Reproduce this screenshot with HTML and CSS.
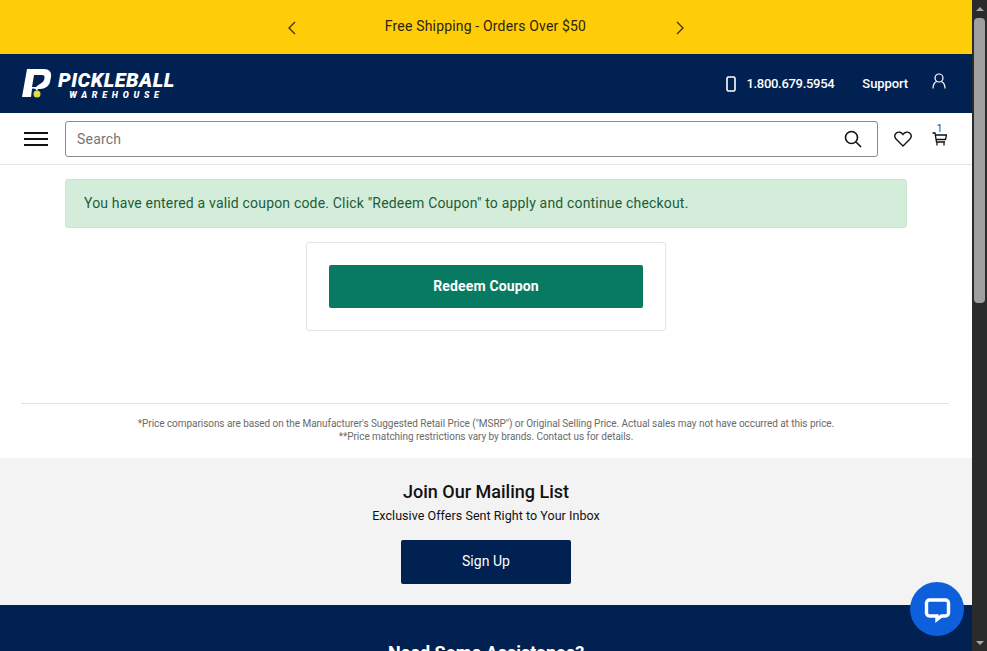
FILE: index.html
```html
<!DOCTYPE html>
<html lang="en">
<head>
  <meta charset="UTF-8" />
  <title>Pickleball Warehouse</title>
  <link rel="stylesheet" href="styles.css">
</head>
<body>
  <div class="page">
    <div class="promo">
      <svg class="promo-arrow" width="10" height="14" viewBox="0 0 10 14"><path d="M8 1 2 7l6 6" /></svg>
      <span class="promo-text">Free Shipping - Orders Over $50</span>
      <svg class="promo-arrow" width="10" height="14" viewBox="0 0 10 14"><path d="m2 1 6 6-6 6" /></svg>
    </div>

    <div class="nav">
      <a class="logo">
        <svg class="logo-mark" width="30" height="30" viewBox="0 0 30 30">
          <path fill="#fff" fill-rule="evenodd" d="M5 0h17c5 0 8 3 7 8l-1 5c-1 4-5 7-10 7h-2l-1 2c-1-2-3-3-5-2l-1 8H0Zm7 6-2 12h4c3-3 7-4 8-7l.5-2c.3-2-.5-3-2.500-3Z" />
          <circle cx="15" cy="25" r="3.500" fill="#e3dc3c" />
        </svg>
        <span class="logo-words">
          <span class="logo-top">PICKLEBALL</span>
          <span class="logo-bottom">WAREHOUSE</span>
        </span>
      </a>
      <div class="nav-right">
        <svg class="phone-icon" width="10" height="16" viewBox="0 0 10 16"><rect x="1" y="1" width="8" height="14" rx="1.500" /></svg>
        <span class="phone-number">1.800.679.5954</span>
        <span class="support">Support</span>
        <svg class="user-icon" width="14" height="16" viewBox="0 0 14 16"><circle cx="7" cy="5" r="4" /><path d="M1 15.500c0-4 1.500-6 3.500-7M13 15.500c0-4-1.500-6-3.500-7" /></svg>
      </div>
    </div>

    <div class="search-row">
      <div class="burger"><span></span><span></span><span></span></div>
      <div class="search-box">
        <span class="search-label">Search</span>
        <svg class="search-icon" width="18" height="18" viewBox="0 0 18 18"><circle cx="7.500" cy="7.500" r="6" /><path d="m12 12 5 5" /></svg>
      </div>
      <svg class="heart-icon" width="18" height="16" viewBox="0 0 18 16"><path d="M9 15 2 8C0 6 .5 3 2.500 1.800 4.500.6 7.500 1 9 3.500 10.500 1 13.500.6 15.500 1.800 17.500 3 18 6 16 8Z" /></svg>
      <div class="cart">
        <span class="cart-count">1</span>
        <svg class="cart-icon" width="15" height="14" viewBox="0 0 15 14"><path d="M.5 1h2.500l1.500 9h8.500M3.500 3h11l-1 4.500h-9.500" /><path d="M5 10.500v3M12 10.500v3" /></svg>
      </div>
    </div>

    <div class="main">
      <div class="alert">You have entered a valid coupon code. Click "Redeem Coupon" to apply and continue checkout.</div>
      <div class="coupon-card">
        <button class="redeem-btn">Redeem Coupon</button>
      </div>
      <div class="disclaimer">
        <p>*Price comparisons are based on the Manufacturer's Suggested Retail Price ("MSRP") or Original Selling Price. Actual sales may not have occurred at this price.</p>
        <p>**Price matching restrictions vary by brands. Contact us for details.</p>
      </div>
    </div>

    <div class="mailing">
      <h2>Join Our Mailing List</h2>
      <p>Exclusive Offers Sent Right to Your Inbox</p>
      <button class="signup-btn">Sign Up</button>
    </div>

    <div class="footer">
      <h3>Need Some Assistance?</h3>
    </div>

    <div class="chat-btn">
      <svg width="28" height="28" viewBox="0 0 28 28"><path d="M6.500 5h16c1.700 0 3 1.300 3 3v10c0 1.700-1.300 3-3 3h-4l-4.500 3.500V21H6.500c-1.700 0-3-1.300-3-3V8c0-1.700 1.300-3 3-3Z" /></svg>
    </div>
  </div>

  <div class="scrollbar">
    <div class="scroll-arrow up"></div>
    <div class="scroll-track"><div class="scroll-thumb"></div></div>
    <div class="scroll-arrow down"></div>
  </div>
</body>
</html>
```

FILE: styles.css
```css
* {
  box-sizing: border-box;
}

html, body {
  height: 651px;
  margin: 0;
  overflow: hidden;
}

body {
  display: flex;
  font-family: Roboto, "Liberation Sans", sans-serif;
  color: #212529;
  background: #fff;
}

.page {
  position: relative;
  width: 972px;
  height: 651px;
  overflow: hidden;
  flex: none;
}

/* promo bar */
.promo {
  height: 54px;
  background: #ffcd07;
  display: flex;
  align-items: center;
  justify-content: center;
  gap: 84px;
  padding-right: 1px;
}

.promo-text {
  width: 210px;
  padding-bottom: 2px;
  text-align: center;
  font-size: 14px;
  letter-spacing: 0.17px;
  color: #2a2410;
}

.promo-arrow {
  fill: none;
  stroke: #3a3210;
  stroke-width: 1.300;
  margin-top: 1px;
}

/* nav */
.nav {
  height: 59px;
  background: #002152;
  color: #fff;
  display: flex;
  align-items: center;
  justify-content: space-between;
  padding: 0 26px 0 22px;
}

.logo {
  display: flex;
  align-items: center;
  gap: 6px;
}

.logo-words {
  display: flex;
  flex-direction: column;
  align-items: center;
  gap: 1px;
  padding-top: 4px;
  font-style: italic;
  font-weight: 900;
  color: #fff;
}

.logo-top {
  font-size: 20px;
  line-height: 18px;
  letter-spacing: 0.5px;
}

.logo-bottom {
  font-size: 9px;
  line-height: 10px;
  letter-spacing: 4.700px;
}

.nav-right {
  display: flex;
  align-items: center;
  font-size: 13px;
  font-weight: 500;
}

.phone-icon {
  fill: none;
  stroke: #fff;
  stroke-width: 1.600;
}

.phone-number {
  margin-left: 10px;
  padding-bottom: 1px;
  letter-spacing: -0.3px;
}

.support {
  margin-left: 28px;
  padding-bottom: 1px;
  letter-spacing: -0.1px;
}

.user-icon {
  fill: none;
  stroke: #fff;
  stroke-width: 1.200;
  margin-left: 24px;
  margin-top: -5px;
}

/* search */
.search-row {
  height: 52px;
  display: flex;
  align-items: center;
  padding: 0 25px 0 24px;
  border-bottom: 1px solid #e6e6e6;
}

.burger {
  width: 24px;
  display: flex;
  flex-direction: column;
  gap: 4px;
}

.burger span {
  height: 2px;
  background: #111;
}

.search-box {
  width: 813px;
  height: 36px;
  margin-left: 17px;
  margin-top: 1px;
  border: 1px solid #8a8a8a;
  border-radius: 3px;
  display: flex;
  align-items: center;
  justify-content: space-between;
  padding: 0 15px 0 11px;
}

.search-label {
  font-size: 14px;
  letter-spacing: 0.2px;
  color: #757575;
}

.search-icon {
  fill: none;
  stroke: #111;
  stroke-width: 1.600;
}

.heart-icon {
  fill: none;
  stroke: #111;
  stroke-width: 1.400;
  margin-left: 16px;
}

.cart {
  position: relative;
  margin-left: 20px;
  width: 15px;
  height: 14px;
}

.cart-count {
  position: absolute;
  top: -8px;
  left: 0;
  width: 15px;
  line-height: 10px;
  text-align: center;
  font-size: 10px;
  color: #444;
}

.cart-icon {
  display: block;
  fill: none;
  stroke: #111;
  stroke-width: 1.300;
}

/* main */
.main {
  height: 293px;
  padding-top: 14px;
}

.alert {
  width: 842px;
  height: 49px;
  margin-left: 65px;
  padding: 0 0 2px 18px;
  display: flex;
  align-items: center;
  font-size: 14px;
  letter-spacing: 0.18px;
  color: #1c5c38;
  background: #d4edda;
  border: 1px solid #c9e6d1;
  border-radius: 3px;
}

.coupon-card {
  width: 360px;
  height: 89px;
  margin: 14px 0 0 306px;
  padding: 22px;
  border: 1px solid #e4e4e4;
  border-radius: 3px;
}

.redeem-btn {
  display: block;
  width: 100%;
  height: 43px;
  padding: 0 0 2px;
  border: none;
  border-radius: 2px;
  background: #087a61;
  color: #fff;
  font-family: inherit;
  font-size: 14px;
  font-weight: 700;
  letter-spacing: 0.15px;
}

.disclaimer {
  margin: 72px 23px 0 21px;
  padding: 13px 0 0 2px;
  border-top: 1px solid #e2e2e2;
  text-align: center;
  font-size: 10px;
  line-height: 13px;
  letter-spacing: -0.05px;
  color: #6a6a6a;
}

.disclaimer p {
  margin: 0;
}

/* mailing list */
.mailing {
  height: 147px;
  background: #f4f3f3;
  text-align: center;
  padding-top: 24px;
}

.mailing h2 {
  margin: 0;
  font-size: 18px;
  line-height: 20px;
  font-weight: 500;
  color: #111;
}

.mailing p {
  margin: 6px 0 0;
  font-size: 12.500px;
  line-height: 16px;
  letter-spacing: 0.05px;
  color: #111;
}

.signup-btn {
  width: 170px;
  height: 44px;
  margin-top: 16px;
  padding: 0 0 2px;
  border: none;
  border-radius: 2px;
  background: #002152;
  color: #fff;
  font-family: inherit;
  font-size: 14px;
  letter-spacing: 0.05px;
}

/* footer */
.footer {
  height: 60px;
  background: #002152;
  color: #fff;
  text-align: center;
  padding-top: 38px;
}

.footer h3 {
  margin: 0;
  font-size: 18px;
  line-height: 20px;
  font-weight: 700;
}

/* chat bubble sits over the page */
.chat-btn {
  position: absolute;
  left: 910px;
  top: 582px;
  width: 54px;
  height: 54px;
  border-radius: 50%;
  background: #0d5fdc;
  display: flex;
  align-items: center;
  justify-content: center;
}

.chat-btn svg {
  fill: none;
  stroke: #fff;
  stroke-width: 3.400;
}

/* scrollbar */
.scrollbar {
  width: 15px;
  height: 651px;
  flex: none;
  background: #2b2b2b;
  display: flex;
  flex-direction: column;
  align-items: center;
}

.scroll-arrow {
  width: 15px;
  height: 17px;
  display: flex;
  align-items: center;
  justify-content: center;
}

.scroll-arrow::before {
  content: "";
  border-left: 4px solid transparent;
  border-right: 4px solid transparent;
}

.scroll-arrow.up::before {
  border-bottom: 4px solid #a8a8a8;
}

.scroll-arrow.down::before {
  border-top: 4px solid #a8a8a8;
}

.scroll-track {
  flex: 1;
  width: 100%;
  padding: 1px 2px 0;
}

.scroll-thumb {
  height: 285px;
  background: #9f9f9f;
  border-radius: 4px;
}
```
